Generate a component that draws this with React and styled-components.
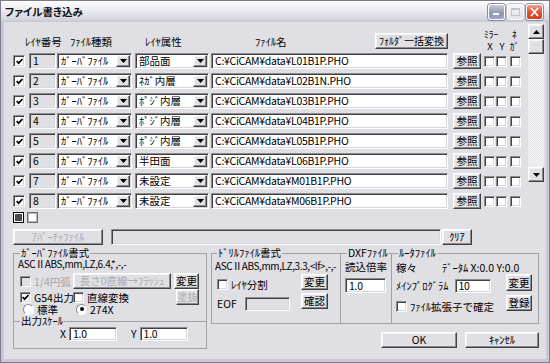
import React from "react";
import styled, { createGlobalStyle, css } from "styled-components";

const FONT = `"Noto Sans CJK JP", "Liberation Sans", sans-serif`;

const GlobalStyle = createGlobalStyle`
  html, body { margin: 0; padding: 0; background: #ffffff; }
  body { font-family: ${FONT}; font-size: 10.5px; color: #000; }
  * { box-sizing: border-box; }
`;

const sunken = css`
  border: 1px solid;
  border-color: #8c8c90 #ffffff #ffffff #8c8c90;
  box-shadow: inset 1px 1px 0 #404040, inset -1px -1px 0 #d8d8dc;
`;

const raised = css`
  border: 1px solid;
  border-color: #ffffff #404040 #404040 #ffffff;
  box-shadow: inset -1px -1px 0 #8c8c90, inset 1px 1px 0 #f4f4f6;
`;

const Window = styled.div`
  width: 550px;
  height: 363px;
  display: flex;
  flex-direction: column;
  background: #c9c9d6;
  border: 1px solid #7c7c8c;
  padding: 0 3px 3px;
`;

const TitleBar = styled.div`
  height: 21px;
  margin: 0 -3px;
  display: flex;
  align-items: center;
  padding: 0 6px 0 4px;
  background: linear-gradient(#ffffff, #ececf2 40%, #d6d6e0 85%, #c6c6d2);
`;

const TitleText = styled.div`
  flex: 1;
  font-weight: bold;
  font-size: 10.5px;
  font-feature-settings: "palt";
  color: #101010;
`;

const CapButtons = styled.div`
  display: flex;
  gap: 2px;
`;

const CapButton = styled.div`
  width: 17px;
  height: 16px;
  border-radius: 3px;
  border: 1px solid #ffffff;
  display: flex;
  align-items: center;
  justify-content: center;
  background: ${(p) =>
    p.$kind === "close"
      ? "linear-gradient(#f0a090, #e05a3c 45%, #d0401e)"
      : p.$kind === "max"
      ? "linear-gradient(#f6f6fa, #e2e2ea)"
      : "linear-gradient(#c6cad8, #9096b0 60%, #a2a8c0)"};
  box-shadow: 0 0 0 1px ${(p) => (p.$kind === "max" ? "#c4c4d0" : "#8a8ea4")};
`;

const Client = styled.div`
  flex: 1;
  background: #e0dfe3;
  padding: 0 0 0 9px;
  display: flex;
  flex-direction: column;
`;

const TopArea = styled.div`
  display: flex;
  align-items: flex-start;
`;

const Table = styled.div`
  width: 508px;
  display: flex;
  flex-direction: column;
`;

const Header = styled.div`
  height: 31px;
  display: grid;
  grid-template-columns: 12px 45px 75px 110px 120px 109px 37px;
  align-items: end;
  padding-bottom: 4px;
`;

const HeadLabel = styled.div`
  line-height: 12px;
  white-space: nowrap;
  margin-bottom: 1px;
`;

const MirrorHead = styled.div`
  display: grid;
  grid-template-columns: 12px 12px 13px;
  line-height: 12px;
  font-size: 9.5px;
  margin-bottom: -3px;
`;

const MirrorCell = styled.div`
  text-align: ${(p) => (p.$span ? "left" : "center")};
  grid-column: ${(p) => (p.$span ? "1 / 3" : "auto")};
  white-space: nowrap;
`;

const Rows = styled.div`
  display: flex;
  flex-direction: column;
  gap: 4px;
`;

const Row = styled.div`
  display: flex;
  align-items: center;
  height: 16px;
`;

const Box = styled.span`
  flex: none;
  width: ${(p) => p.$size}px;
  height: ${(p) => p.$size}px;
  margin-left: ${(p) => p.$ml || 0}px;
  ${sunken};
  background: ${(p) => (p.$disabled ? "#e0dfe3" : "#ffffff")};
  display: inline-flex;
  align-items: center;
  justify-content: center;
`;

const Check = ({ checked, disabled, size = 12, ml }) => (
  <Box $size={size} $disabled={disabled} $ml={ml}>
    {checked && (
      <svg width="7" height="7" viewBox="0 0 7 7">
        <path d="M0.6 3 L2.6 5.2 L6.5 1" fill="none" stroke="#000" strokeWidth="1.7" />
      </svg>
    )}
  </Box>
);

const LayerNum = styled.div`
  width: 27px;
  height: 16px;
  margin-left: 4px;
  ${sunken};
  background: #e0dfe3;
  padding-left: 3px;
  line-height: 14px;
`;

const ComboWrap = styled.div`
  width: ${(p) => p.$w}px;
  height: 16px;
  margin-left: ${(p) => p.$ml}px;
  ${sunken};
  background: #ffffff;
  display: flex;
  align-items: center;
  padding: 1px;
`;

const ComboText = styled.span`
  flex: 1;
  padding-left: 2px;
  line-height: 12px;
  white-space: nowrap;
`;

const ArrowButton = styled.span`
  flex: none;
  width: ${(p) => p.$w || 14}px;
  height: ${(p) => p.$h || 12}px;
  ${raised};
  background: #e0dfe3;
  display: flex;
  align-items: center;
  justify-content: center;
`;

const Tri = ({ up }) => (
  <svg width="7" height="4" viewBox="0 0 7 4">
    <path d={up ? "M0 4 L7 4 L3.5 0 Z" : "M0 0 L7 0 L3.5 4 Z"} fill="#000" />
  </svg>
);

const Combo = ({ w, ml, value }) => (
  <ComboWrap $w={w} $ml={ml}>
    <ComboText>{value}</ComboText>
    <ArrowButton>
      <Tri />
    </ArrowButton>
  </ComboWrap>
);

const Field = styled.div`
  width: ${(p) => p.$w}px;
  height: ${(p) => p.$h || 16}px;
  margin-left: ${(p) => p.$ml || 0}px;
  margin-top: ${(p) => p.$mt || 0}px;
  ${sunken};
  background: ${(p) => (p.$grey ? "#e0dfe3" : "#ffffff")};
  padding-left: 3px;
  line-height: ${(p) => (p.$h || 16) - 2}px;
  letter-spacing: -0.3px;
  white-space: nowrap;
  overflow: hidden;
  flex: none;
`;

const Button = styled.div`
  flex: none;
  width: ${(p) => p.$w}px;
  height: ${(p) => p.$h || 16}px;
  margin-left: ${(p) => p.$ml || 0}px;
  ${raised};
  background: #e0dfe3;
  display: flex;
  align-items: center;
  justify-content: center;
  white-space: nowrap;
  line-height: 12px;
  font-size: ${(p) => p.$fs || 10.5}px;
  color: ${(p) => (p.$disabled ? "#ababb0" : "#000")};
`;

const ScrollBar = styled.div`
  width: 16px;
  height: 158px;
  margin: 2px 0 0 7px;
  display: flex;
  flex-direction: column;
  background: repeating-conic-gradient(#f4f4f6 0 25%, #e6e6ea 0 50%) 0 0 / 2px 2px;
`;

const ScrollThumb = styled.div`
  height: 15px;
  ${raised};
  background: #e0dfe3;
`;

const ScrollTrack = styled.div`
  flex: 1;
`;

const ToggleRow = styled.div`
  display: flex;
  gap: 3px;
  margin-top: 3px;
`;

const Toggle = styled.div`
  width: 11px;
  height: 11px;
  border: 1px solid ${(p) => (p.$on ? "#000" : "#6c6c70")};
  background: ${(p) => (p.$on ? "#4a4a4e" : "#ffffff")};
  box-shadow: inset 0 0 0 1px ${(p) => (p.$on ? "#ffffff" : "#b8b8bc")};
`;

const ApertureRow = styled.div`
  display: flex;
  align-items: center;
  margin-top: 6px;
  height: 16px;
`;

const Bottom = styled.div`
  display: flex;
  align-items: flex-start;
  margin-top: 2px;
`;

const Group = styled.fieldset`
  margin: 0;
  margin-left: ${(p) => p.$ml || 0}px;
  padding: 0 ${(p) => p.$pr ?? 4}px 4px ${(p) => p.$pl ?? 4}px;
  border: 1px solid #a0a0a6;
  width: ${(p) => p.$w}px;
  height: ${(p) => p.$h}px;
  min-width: 0;
  display: flex;
  flex-direction: column;
  flex: none;
`;

const SubGroup = styled(Group)`
  flex: 1;
  margin: 0 -5px -5px;
  width: auto;
  padding: 0 4px 5px;
`;

const Legend = styled.legend`
  padding: 0 1px;
  margin-left: 2px;
  line-height: 12px;
  white-space: nowrap;
`;

const Line = styled.div`
  line-height: 12px;
  white-space: nowrap;
  margin-top: ${(p) => p.$mt || 0}px;
  margin-left: ${(p) => p.$ml || 0}px;
`;

const FormatText = styled.div`
  line-height: 12px;
  white-space: nowrap;
  font-size: 10px;
  letter-spacing: -0.4px;
  margin-top: ${(p) => p.$mt || 0}px;
`;

const FlexRow = styled.div`
  display: flex;
  align-items: ${(p) => (p.$top ? "flex-start" : "center")};
  height: ${(p) => p.$h || 16}px;
  margin-top: ${(p) => p.$mt || 0}px;
`;

const CheckItem = styled.div`
  display: flex;
  align-items: center;
  gap: 3px;
  width: ${(p) => (p.$w ? `${p.$w}px` : "auto")};
  flex: none;
  margin-left: ${(p) => p.$ml || 0}px;
  margin-top: ${(p) => p.$mt || 0}px;
  white-space: nowrap;
  color: ${(p) => (p.$disabled ? "#a4a4a8" : "#000")};
`;

const RadioDot = styled.span`
  width: 11px;
  height: 11px;
  border-radius: 50%;
  border: 1px solid;
  border-color: #8c8c90 #ffffff #ffffff #8c8c90;
  background: #ffffff;
  display: inline-flex;
  align-items: center;
  justify-content: center;
  &::after {
    content: "";
    width: 4px;
    height: 4px;
    border-radius: 50%;
    background: ${(p) => (p.$on ? "#000" : "transparent")};
  }
`;

const RightCol = styled.div`
  display: flex;
  flex-direction: column;
  margin-left: 4px;
`;

const GroupsRow = styled.div`
  display: flex;
`;

const Column = styled.div`
  display: flex;
  flex-direction: column;
  width: ${(p) => (p.$w ? `${p.$w}px` : "auto")};
  margin-top: ${(p) => p.$mt || 0}px;
  gap: ${(p) => p.$gap || 0}px;
`;

const ButtonsRow = styled.div`
  display: flex;
  justify-content: flex-end;
  gap: 8px;
  margin-top: 8px;
`;

const rows = [
  ["1", "部品面", "L01B1P"],
  ["2", "ﾈｶﾞ内層", "L02B1N"],
  ["3", "ﾎﾟｼﾞ内層", "L03B1P"],
  ["4", "ﾎﾟｼﾞ内層", "L04B1P"],
  ["5", "ﾎﾟｼﾞ内層", "L05B1P"],
  ["6", "半田面", "L06B1P"],
  ["7", "未設定", "M01B1P"],
  ["8", "未設定", "M06B1P"],
];

const App = () => {
  return (
    <>
      <GlobalStyle />
      <Window>
        <TitleBar>
          <TitleText>ファイル書き込み</TitleText>
          <CapButtons>
            <CapButton $kind="min">
              <svg width="11" height="10" viewBox="0 0 11 10">
                <rect x="2" y="6" width="6" height="2" fill="#fff" />
              </svg>
            </CapButton>
            <CapButton $kind="max">
              <svg width="11" height="10" viewBox="0 0 11 10">
                <rect x="1.5" y="1.5" width="8" height="7" fill="none" stroke="#c4c4d0" />
                <rect x="1.5" y="1.5" width="8" height="1.5" fill="#c4c4d0" />
              </svg>
            </CapButton>
            <CapButton $kind="close">
              <svg width="11" height="10" viewBox="0 0 11 10">
                <path d="M2 1 L9 9 M9 1 L2 9" stroke="#fff" strokeWidth="1.8" />
              </svg>
            </CapButton>
          </CapButtons>
        </TitleBar>
        <Client>
          <TopArea>
            <Table>
              <Header>
                <span />
                <HeadLabel>ﾚｲﾔ番号</HeadLabel>
                <HeadLabel>ﾌｧｲﾙ種類</HeadLabel>
                <HeadLabel>ﾚｲﾔ属性</HeadLabel>
                <HeadLabel>ﾌｧｲﾙ名</HeadLabel>
                <Button $w={73} $fs={10}>
                  ﾌｫﾙﾀﾞ一括変換
                </Button>
                <MirrorHead>
                  <MirrorCell $span>ﾐﾗｰ</MirrorCell>
                  <MirrorCell>ﾈ</MirrorCell>
                  <MirrorCell>X</MirrorCell>
                  <MirrorCell>Y</MirrorCell>
                  <MirrorCell>ｶﾞ</MirrorCell>
                </MirrorHead>
              </Header>
              <Rows>
                {rows.map(([n, attr, file]) => (
                  <Row key={n}>
                    <Check checked />
                    <LayerNum>{n}</LayerNum>
                    <Combo w={75} ml={1} value="ｶﾞｰﾊﾞﾌｧｲﾙ" />
                    <Combo w={74} ml={3} value={attr} />
                    <Field $w={237} $ml={2}>
                      C:¥CiCAM¥data¥{file}.PHO
                    </Field>
                    <Button $w={28} $ml={5}>
                      参照
                    </Button>
                    <Check size={11} ml={3} />
                    <Check size={11} ml={1} />
                    <Check size={11} ml={3} />
                  </Row>
                ))}
              </Rows>
            </Table>
            <ScrollBar>
              <ArrowButton $w={16} $h={15}>
                <Tri up />
              </ArrowButton>
              <ScrollThumb />
              <ScrollTrack />
              <ArrowButton $w={16} $h={15}>
                <Tri />
              </ArrowButton>
            </ScrollBar>
          </TopArea>
          <ToggleRow>
            <Toggle $on />
            <Toggle />
          </ToggleRow>
          <ApertureRow>
            <Button $w={90} $disabled>
              ｱﾊﾟｰﾁｬﾌｧｲﾙ
            </Button>
            <Field $w={330} $ml={8} $grey />
            <Button $w={30} $ml={1}>
              ｸﾘｱ
            </Button>
          </ApertureRow>
          <Bottom>
            <Group $w={194} $h={102}>
              <Legend>ｶﾞｰﾊﾞﾌｧｲﾙ書式</Legend>
              <FormatText $mt={-1}>ASCⅡABS,mm,LZ,6.4,*,-,-</FormatText>
              <FlexRow $mt={3}>
                <CheckItem $w={55} $disabled>
                  <Check disabled size={11} ml={2} />
                  1/4円弧
                </CheckItem>
                <Button $w={98} $disabled>
                  長さ0直線→ﾌﾗｯｼｭ
                </Button>
                <Button $w={25} $ml={3}>
                  変更
                </Button>
              </FlexRow>
              <FlexRow $mt={0}>
                <CheckItem $w={55}>
                  <Check checked size={11} ml={2} />
                  G54出力
                </CheckItem>
                <CheckItem $w={103}>
                  <Check size={11} />
                  直線変換
                </CheckItem>
                <Button $w={23} $disabled>
                  塗抜
                </Button>
              </FlexRow>
              <FlexRow $h={12} $mt={-2}>
                <CheckItem $w={53} $ml={5}>
                  <RadioDot />
                  標準
                </CheckItem>
                <CheckItem>
                  <RadioDot $on />
                  274X
                </CheckItem>
              </FlexRow>
              <SubGroup>
                <Legend>出力ｽｹｰﾙ</Legend>
                <FlexRow $h={14}>
                  <Line $ml={42}>X</Line>
                  <Field $w={48} $h={14} $ml={3}>
                    1.0
                  </Field>
                  <Line $ml={14}>Y</Line>
                  <Field $w={48} $h={14} $ml={3}>
                    1.0
                  </Field>
                </FlexRow>
              </SubGroup>
            </Group>
            <RightCol>
              <GroupsRow>
                <Group $w={130} $h={77} $pl={3}>
                  <Legend>ﾄﾞﾘﾙﾌｧｲﾙ書式</Legend>
                  <FormatText $mt={1}>ASCⅡABS,mm,LZ,3.3,&lt;lf&gt;,-,-</FormatText>
                  <FlexRow $h={36} $top>
                    <Column $w={86}>
                      <CheckItem $ml={2} $mt={5}>
                        <Check size={11} />
                        ﾚｲﾔ分割
                      </CheckItem>
                      <FlexRow $mt={5} $h={14}>
                        <Line $ml={2}>EOF</Line>
                        <Field $w={45} $h={14} $ml={8} $grey />
                      </FlexRow>
                    </Column>
                    <Column $gap={3} $mt={2}>
                      <Button $w={27}>変更</Button>
                      <Button $w={27}>確認</Button>
                    </Column>
                  </FlexRow>
                </Group>
                <Group $w={52} $h={77} $ml={-1}>
                  <Legend>DXFﾌｧｲﾙ</Legend>
                  <Line $mt={2}>読込倍率</Line>
                  <Field $w={41} $h={15} $mt={5}>
                    1.0
                  </Field>
                </Group>
                <Group $w={148} $h={77} $ml={-1}>
                  <Legend>ﾙｰﾀﾌｧｲﾙ</Legend>
                  <FlexRow $h={12} $mt={3}>
                    <Line>稼々</Line>
                    <Line $ml={25}>ﾃﾞｰﾀﾑ X:0.0 Y:0.0</Line>
                  </FlexRow>
                  <FlexRow $h={40} $top>
                    <Column $w={110}>
                      <FlexRow $mt={5} $h={14}>
                        <Line>ﾒｲﾝﾌﾟﾛｸﾞﾗﾑ</Line>
                        <Field $w={36} $h={14} $ml={6}>
                          10
                        </Field>
                      </FlexRow>
                      <CheckItem $mt={6}>
                        <Check size={11} />
                        ﾌｧｲﾙ拡張子で確定
                      </CheckItem>
                    </Column>
                    <Column $gap={4}>
                      <Button $w={26} $h={17}>
                        変更
                      </Button>
                      <Button $w={26}>登録</Button>
                    </Column>
                  </FlexRow>
                </Group>
              </GroupsRow>
              <ButtonsRow>
                <Button $w={76}>OK</Button>
                <Button $w={74}>ｷｬﾝｾﾙ</Button>
              </ButtonsRow>
            </RightCol>
          </Bottom>
        </Client>
      </Window>
    </>
  );
};

export default App;
